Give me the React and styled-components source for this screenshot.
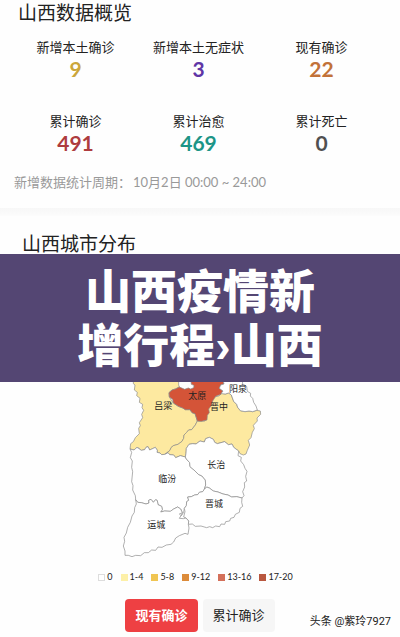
import { useState } from "react";
import styled, { createGlobalStyle } from "styled-components";

const stats = [
  { label: "新增本土确诊", value: 9, color: "#cba63a" },
  { label: "新增本土无症状", value: 3, color: "#5f36a6" },
  { label: "现有确诊", value: 22, color: "#c27239" },
  { label: "累计确诊", value: 491, color: "#ae3c3e" },
  { label: "累计治愈", value: 469, color: "#1c9587" },
  { label: "累计死亡", value: 0, color: "#505050" },
];

const legend = [
  { label: "0", color: "#ffffff" },
  { label: "1-4", color: "#fdf0a8" },
  { label: "5-8", color: "#f0c552" },
  { label: "9-12", color: "#dc8b3a" },
  { label: "13-16", color: "#d4705a" },
  { label: "17-20", color: "#b9573f" },
];

const regions = [
  {
    name: "吕梁",
    fill: "#fde9a0",
    x: 160,
    y: 90,
    d: "M70 10L70 26L75 30L73 45L82 52L80 62L90 70L88 82L98 88L96 98L101 106L95 118L98 128L88 143L91 152L86 160L88 176L76 188L70 200L62 206L60 222L72 225L81 217L88 220L94 226L104 224L108 217L114 215L119 225L130 220L136 217L142 226L141 232L150 234L155 239L165 238L180 226L183 218L190 212L204 208L216 199L221 190L222 180L230 172L236 165L245 164L256 150L262 138L255 116L246 113L240 104L226 104L218 99L205 94L190 84L178 66L177 53L186 45L196 42L208 36L206 30L206 10Z",
  },
  {
    name: "晋中",
    fill: "#fde9a0",
    x: 327,
    y: 95,
    d: "M300 68L312 66L326 63L335 55L346 57L356 54L364 60L371 79L380 88L383 97L391 107L405 110L417 108L428 110L440 106L451 108L452 118L441 129L442 138L430 151L433 161L427 172L423 188L415 196L419 210L412 226L408 237L400 240L390 236L386 228L371 217L366 207L355 209L344 200L332 203L322 206L314 202L310 193L298 187L287 191L283 201L270 198L258 207L248 206L237 208L229 220L228 235L226 246L211 242L197 248L191 240L179 239L174 233L165 238L180 226L183 218L190 212L204 208L216 199L221 190L222 180L230 172L236 165L245 164L256 150L262 138L285 138Z",
  },
  {
    name: "太原",
    fill: "#d45438",
    x: 262,
    y: 60,
    d: "M242 10L244 28L252 31L251 38L242 42L235 39L224 43L208 36L196 42L186 45L177 53L178 66L188 73L190 84L205 94L218 99L226 104L240 104L246 113L255 116L259 128L262 138L274 139L291 135L292 121L298 113L296 102L304 92L308 78L317 64L333 58L339 48L328 40L332 30L342 27L338 10Z",
  },
  {
    name: "阳泉",
    fill: "#ffffff",
    x: 384,
    y: 40,
    d: "M338 10L342 27L332 30L328 40L339 48L333 56L346 57L356 54L364 60L371 79L380 88L383 97L391 107L405 110L417 108L428 110L442 105L438 93L431 82L428 70L421 63L422 55L412 49L410 34L397 26L400 10Z",
  },
  {
    name: "临汾",
    fill: "#ffffff",
    x: 172,
    y: 310,
    d: "M60 222L65 232L61 248L67 258L65 277L68 290L65 320L69 332L68 345L76 362L77 374L83 382L94 383L108 387L117 384L116 376L123 373L130 382L137 374L142 377L144 389L155 394L157 404L152 411L164 408L181 409L191 402L203 396L212 402L217 413L214 422L221 412L223 400L229 392L230 380L236 376L233 366L244 365L254 360L263 359L268 352L278 350L283 343L287 330L286 315L276 303L265 298L252 285L240 275L239 263L229 252L226 246L211 242L197 248L191 240L179 239L174 233L165 238L155 239L150 234L141 232L142 226L136 217L119 225L114 215L108 217L104 224L94 226L81 217L72 225Z",
  },
  {
    name: "长治",
    fill: "#ffffff",
    x: 319,
    y: 268,
    d: "M226 246L228 235L229 220L237 208L248 206L258 207L270 198L283 201L287 191L298 187L310 193L314 202L322 206L344 200L355 209L366 207L371 217L386 228L384 242L394 247L392 258L401 269L405 280L411 289L407 304L410 318L403 323L404 336L398 350L402 362L396 369L380 365L365 366L354 360L339 357L324 351L310 348L298 339L290 336L283 343L287 330L286 315L276 303L265 298L252 285L240 275L239 263L229 252Z",
  },
  {
    name: "晋城",
    fill: "#ffffff",
    x: 312,
    y: 385,
    d: "M290 336L298 339L310 348L324 351L339 357L354 360L365 366L380 365L396 369L395 382L398 394L390 400L388 412L376 418L372 427L362 430L359 438L347 440L344 448L333 447L329 455L317 453L308 458L299 455L290 458L273 453L256 454L247 447L235 448L236 438L228 429L221 426L225 410L223 400L229 392L230 380L236 376L233 366L244 365L254 360L263 359L268 352L278 350L283 343Z",
  },
  {
    name: "运城",
    fill: "#ffffff",
    x: 139,
    y: 447,
    d: "M77 374L83 382L94 383L108 387L117 384L116 376L123 373L130 382L137 374L142 377L144 389L155 394L157 404L152 411L164 408L181 409L191 402L203 396L212 402L217 413L208 417L213 422L208 430L220 431L228 429L236 438L235 448L237 459L234 478L225 475L208 482L197 489L191 501L183 508L169 510L156 517L144 516L137 526L125 525L115 533L103 533L92 542L77 541L66 545L55 541L45 541L45 528L40 513L44 499L42 487L49 474L53 457L61 442L66 423L73 412L74 398L79 387Z",
  },
];

const tabs = ["现有确诊", "累计确诊"];

export default function App() {
  const [active, setActive] = useState(tabs[0]);

  return (
    <Page>
      <GlobalStyle />
      <Overview>
        <Title>山西数据概览</Title>
        <StatGrid>
          {stats.map((stat) => (
            <Stat key={stat.label} $color={stat.color}>
              <dt>{stat.label}</dt>
              <dd>{stat.value}</dd>
            </Stat>
          ))}
        </StatGrid>
        <Period>
          <span>新增数据统计周期：</span>
          <span>10月2日 00:00 ~ 24:00</span>
        </Period>
      </Overview>
      <Divider />
      <Distribution>
        <Title $indented>山西城市分布</Title>
        <Banner>
          山西疫情新
          <br />
          增行程›山西
        </Banner>
        <Map viewBox="21 21 498 540" role="img" aria-label="山西城市分布">
          {regions.map((region) => (
            <path key={region.name} d={region.d} fill={region.fill} />
          ))}
          {regions.map((region) => (
            <text key={region.name} x={region.x} y={region.y}>
              {region.name}
            </text>
          ))}
        </Map>
        <Legend>
          {legend.map((item) => (
            <LegendItem key={item.label} $color={item.color}>
              {item.label}
            </LegendItem>
          ))}
        </Legend>
        <Tabs>
          {tabs.map((tab) => (
            <Tab
              key={tab}
              type="button"
              aria-pressed={tab === active}
              $active={tab === active}
              onClick={() => setActive(tab)}
            >
              {tab}
            </Tab>
          ))}
        </Tabs>
        <Watermark>头条 @紫玲7927</Watermark>
      </Distribution>
    </Page>
  );
}

const GlobalStyle = createGlobalStyle`
  body {
    margin: 0;
    background: #fefefe;
    color: #222;
    font-family: Lato, "Noto Sans CJK SC", sans-serif;
  }
`;

const Page = styled.main`
  overflow: hidden;
`;

const Overview = styled.section`
  padding: 3px 0 16px;
`;

const Title = styled.h2`
  margin: 0;
  padding-left: ${({ $indented }) => ($indented ? "22px" : "18px")};
  font-size: 19px;
  line-height: 20px;
  font-weight: 400;
`;

const StatGrid = styled.dl`
  display: grid;
  grid-template-columns: repeat(3, 1fr);
  row-gap: 30px;
  margin: 0;
  padding: 15px 17px 0 14px;
`;

const Stat = styled.div`
  text-align: center;
  white-space: nowrap;

  dt {
    font-size: 13px;
    line-height: 18px;
  }

  dd {
    margin: 0;
    color: ${({ $color }) => $color};
    font-size: 21px;
    line-height: 26px;
    font-weight: 700;
  }
`;

const Period = styled.p`
  display: flex;
  gap: 2px;
  margin: 0;
  padding: 16px 14px 0;
  color: #999;
  font-size: 13px;
  line-height: 20px;
`;

const Divider = styled.hr`
  height: 8px;
  margin: 0;
  border: 0;
  background: linear-gradient(#f7f7f7, #fcfcfc);
`;

const Distribution = styled.section`
  position: relative;
  padding: 18px 0 5px;
`;

const Banner = styled.h1`
  margin: 0;
  padding: 11px 0 9px;
  background: #544673;
  color: #fff;
  font-family: "Liberation Sans", "Noto Sans CJK SC", sans-serif;
  font-size: 46px;
  line-height: 54px;
  font-weight: 900;
  text-align: center;
`;

const Map = styled.svg`
  display: block;
  width: 166px;
  height: 180px;
  margin: 0 auto;

  path {
    stroke: #888;
    stroke-width: 2;
    stroke-linejoin: round;
  }

  text {
    fill: #222;
    font-size: 27px;
    text-anchor: middle;
    dominant-baseline: central;
  }
`;

const Legend = styled.ul`
  display: flex;
  justify-content: center;
  gap: 8px;
  margin: 0;
  padding: 8px 9px 0 0;
  list-style: none;
`;

const LegendItem = styled.li`
  display: flex;
  align-items: center;
  gap: 2px;
  font-size: 9px;
  line-height: 14px;

  &::before {
    content: "";
    box-sizing: border-box;
    width: 7px;
    height: 7px;
    border: ${({ $color }) => ($color === "#ffffff" ? "1px solid #ddd" : "0")};
    background: ${({ $color }) => $color};
  }
`;

const Tabs = styled.div`
  display: flex;
  justify-content: center;
  gap: 5px;
  padding-top: 15px;
`;

const Tab = styled.button`
  padding: 0 10px;
  border: 0;
  border-radius: 4px;
  background: ${({ $active }) => ($active ? "#ee4043" : "#f6f6f6")};
  color: ${({ $active }) => ($active ? "#fff" : "#222")};
  font-family: inherit;
  font-size: 13px;
  line-height: 33px;
  font-weight: ${({ $active }) => ($active ? 700 : 400)};
`;

const Watermark = styled.span`
  position: absolute;
  right: 9px;
  bottom: 7px;
  font-family: Roboto, "Noto Sans CJK SC", sans-serif;
  font-size: 11px;
  line-height: 16px;
`;
